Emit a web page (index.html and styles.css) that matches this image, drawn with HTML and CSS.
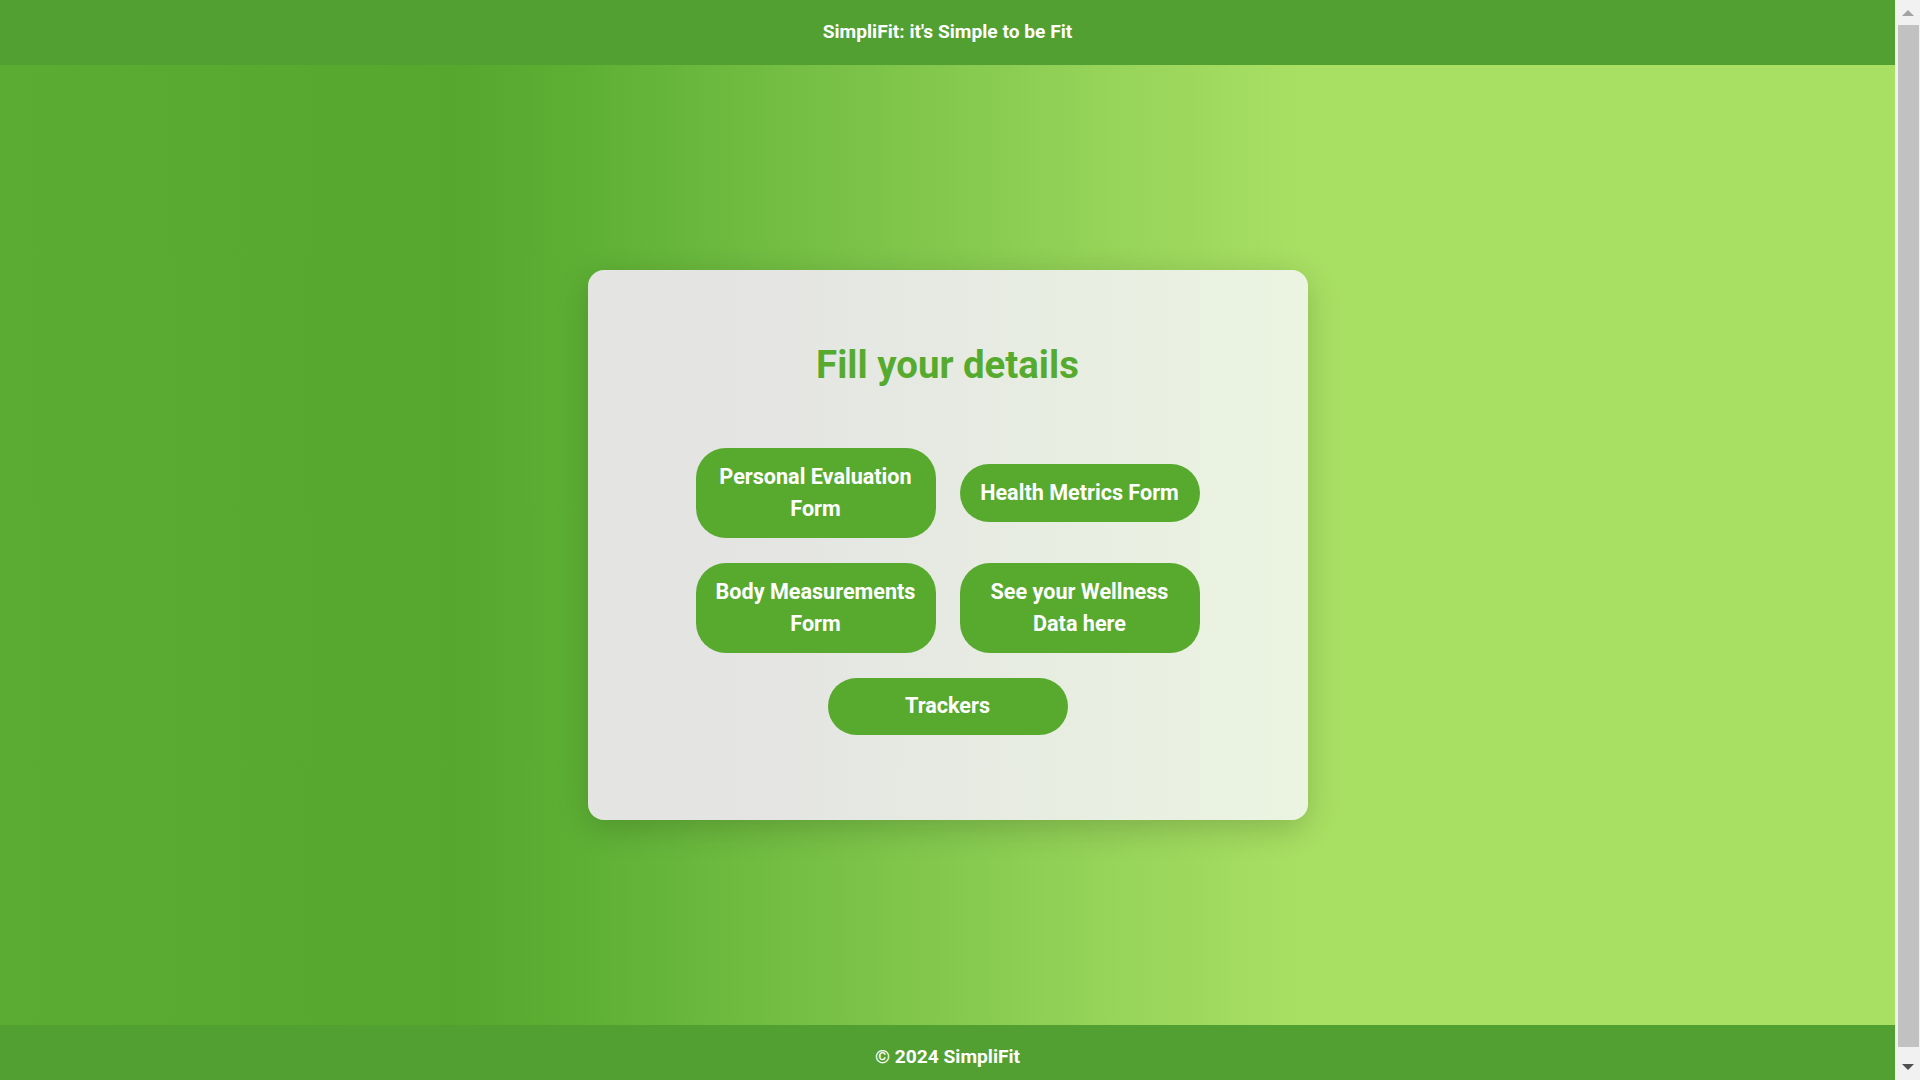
FILE: index.html
```html
<!DOCTYPE html>
<html lang="en">
<head>
<meta charset="utf-8">
<title>SimpliFit</title>
<link rel="stylesheet" href="styles.css">
</head>
<body>
<div class="page">
  <header class="site-header">
    <h1 class="site-title">SimpliFit: it's Simple to be Fit</h1>
  </header>
  <main class="main">
    <section class="card">
      <h2 class="card-title">Fill your details</h2>
      <div class="btn-area">
        <div class="btn-grid">
          <a class="btn" href="#">Personal Evaluation Form</a>
          <a class="btn" href="#">Health Metrics Form</a>
          <a class="btn" href="#">Body Measurements Form</a>
          <a class="btn" href="#">See your Wellness Data here</a>
        </div>
        <a class="btn btn-wide" href="#">Trackers</a>
      </div>
    </section>
  </main>
  <footer class="site-footer">
    <p class="footer-text">&copy; 2024 SimpliFit</p>
  </footer>
</div>
<div class="scrollbar" aria-hidden="true">
  <span class="sb-arrow sb-up"></span>
  <span class="sb-thumb"></span>
  <span class="sb-arrow sb-down"></span>
</div>
</body>
</html>
```
FILE: styles.css
```css
* { box-sizing: border-box; }
html, body { margin: 0; padding: 0; }
body {
  font-family: Roboto, "Liberation Sans", Arial, sans-serif;
  background: #a8e063;
  margin-right: 25px;
}
.page {
  display: flex;
  flex-direction: column;
}
.site-header {
  background: #529f32;
  height: 65px;
  padding: 21px 0 0;
  text-align: center;
}
.site-title {
  margin: 0;
  color: #fff;
  font-size: 19.2px;
  font-weight: 700;
  line-height: 22.5px;
}
.main {
  min-height: 960px;
  display: flex;
  align-items: center;
  justify-content: center;
  background: linear-gradient(to right, #5aac33 0%, #55a82d 24%, #5eb035 31%, #7cc449 46%, #97d45a 59%, #a8e063 69%, #a8e063 100%);
}
.card {
  width: 720px;
  height: 550px;
  border-radius: 16px;
  background: linear-gradient(to right, #e4e4e3 20%, #ebf4e1 100%);
  box-shadow: 0 8px 32px rgba(0, 0, 0, 0.18);
  padding: 72px 40px 0;
  display: flex;
  flex-direction: column;
  align-items: center;
}
.card-title {
  margin: 0 0 61px;
  color: #56ab2f;
  font-size: 38.4px;
  font-weight: 700;
  line-height: 45px;
}
.btn-area {
  width: 504px;
  display: flex;
  flex-direction: column;
  gap: 24.5px;
}
.btn-grid {
  display: grid;
  grid-template-columns: 240px 240px;
  column-gap: 24px;
  row-gap: 25px;
  align-items: center;
}
.btn {
  display: block;
  width: 240px;
  padding: 12.6px 16px;
  border-radius: 30px;
  background: #58aa2f;
  color: #fff;
  text-decoration: none;
  text-align: center;
  font-size: 21.6px;
  font-weight: 700;
  line-height: 32.4px;
}
.btn-wide {
  align-self: center;
}
.site-footer {
  background: #529f32;
  padding: 21px 0 19px;
  text-align: center;
}
.footer-text {
  margin: 0;
  color: #fff;
  font-size: 19.2px;
  font-weight: 700;
  line-height: 22.5px;
}
.scrollbar {
  position: fixed;
  top: 0;
  right: 0;
  width: 25px;
  height: 100vh;
  background: #f1f1f1;
  display: flex;
  flex-direction: column;
  align-items: center;
}
.sb-arrow {
  width: 0;
  height: 0;
  border-left: 6px solid transparent;
  border-right: 6px solid transparent;
}
.sb-up {
  margin-top: 10px;
  border-bottom: 6px solid #a3a3a3;
}
.sb-down {
  margin-bottom: 10px;
  border-top: 6px solid #505050;
}
.sb-thumb {
  width: 21px;
  margin: 9px 0 17px 2px;
  flex: 1;
  background: #c1c1c1;
}
```
